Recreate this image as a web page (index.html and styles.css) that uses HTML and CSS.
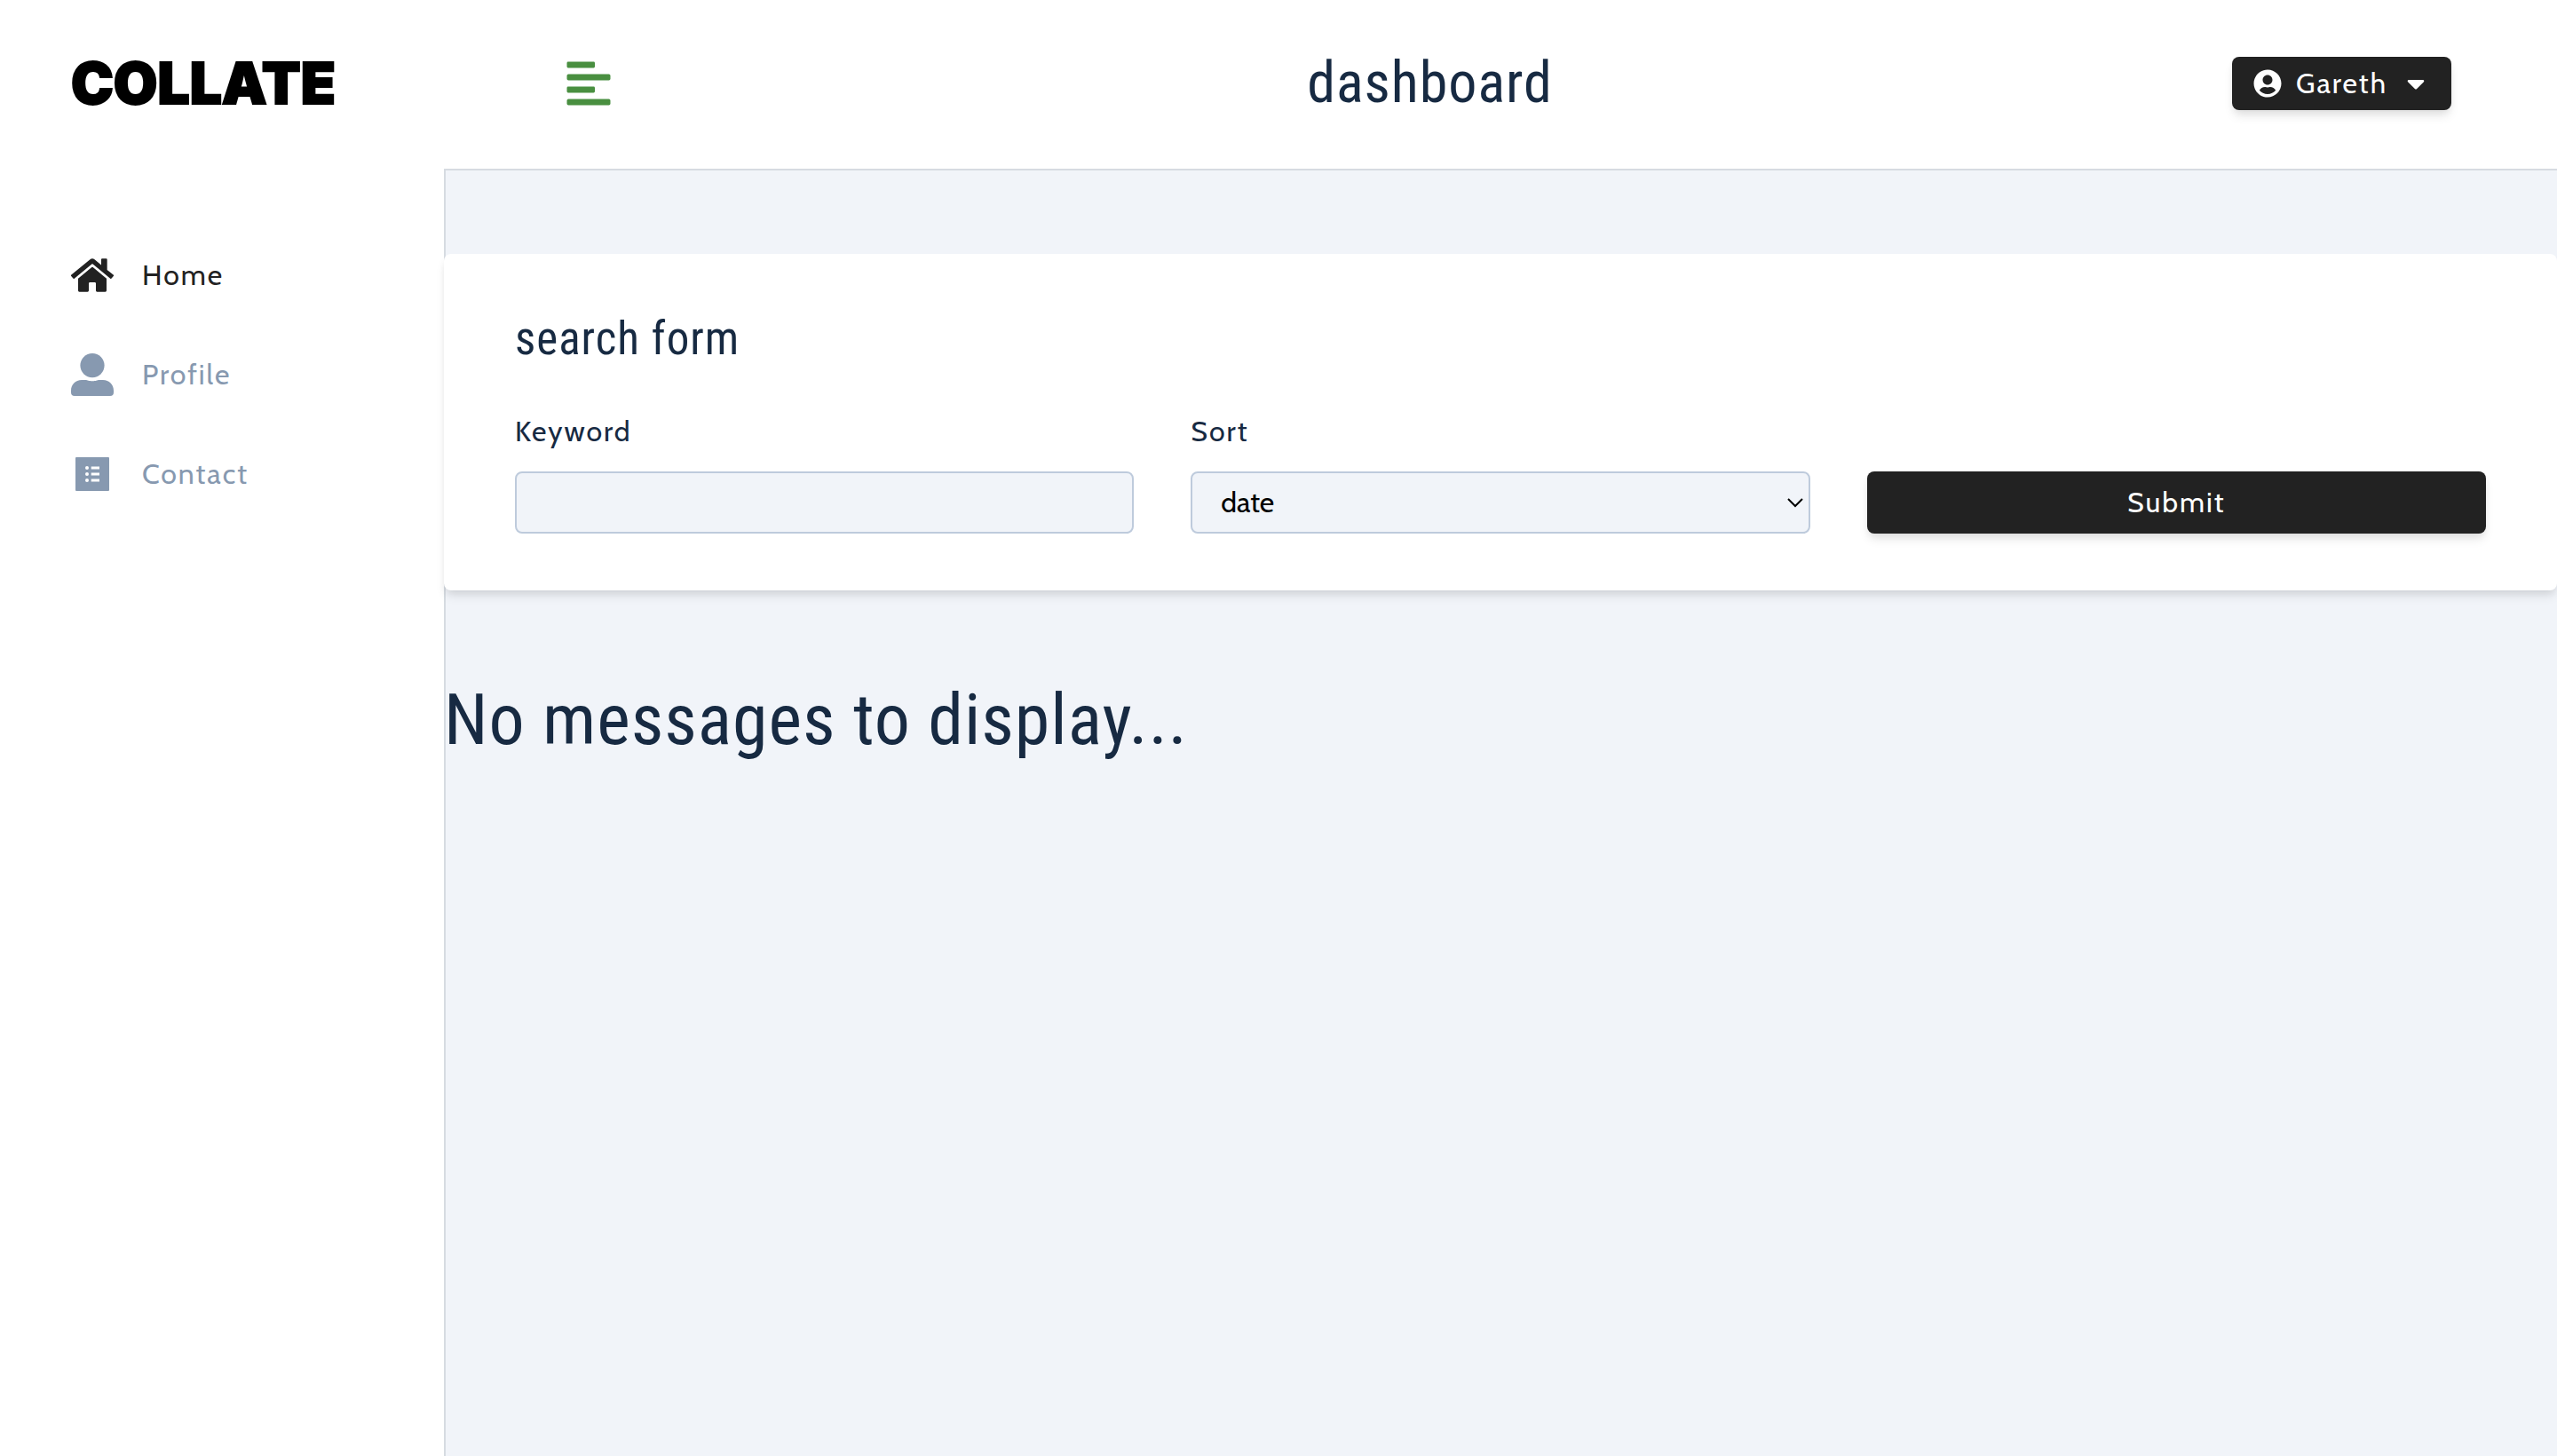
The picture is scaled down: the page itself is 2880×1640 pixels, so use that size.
FILE: index.html
```html
<!DOCTYPE html>
<html lang="en">
<head>
<meta charset="utf-8">
<meta name="viewport" content="width=device-width, initial-scale=1">
<title>Collate | Dashboard</title>
<link rel="stylesheet" href="styles.css">
</head>
<body>
<div class="layout">
  <aside class="sidebar">
    <div class="brand"><a class="logo" href="#">COLLATE</a></div>
    <nav class="nav-links">
      <a class="nav-link active" href="#">
        <svg class="nav-icon" viewBox="0 0 576 512" aria-hidden="true"><path d="M280.37 148.26L96 300.11V464a16 16 0 0 0 16 16l112.06-.29a16 16 0 0 0 15.92-16V368a16 16 0 0 1 16-16h64a16 16 0 0 1 16 16v95.64a16 16 0 0 0 16 16.05L464 480a16 16 0 0 0 16-16V300L295.67 148.26a12.19 12.19 0 0 0-15.3 0zM571.6 251.47L488 182.56V44.05a12 12 0 0 0-12-12h-56a12 12 0 0 0-12 12v72.61L318.47 43a48 48 0 0 0-61 0L4.34 251.47a12 12 0 0 0-1.6 16.9l25.5 31A12 12 0 0 0 45.15 301l235.22-193.74a12.19 12.19 0 0 1 15.3 0L530.9 301a12 12 0 0 0 16.9-1.6l25.5-31a12 12 0 0 0-1.7-16.93z"/></svg>
        <span>Home</span>
      </a>
      <a class="nav-link" href="#">
        <svg class="nav-icon" viewBox="0 0 48 48" aria-hidden="true"><circle cx="24" cy="13.6" r="13.6"/><path d="M0 42C0 35 5 30 12 30h4c3 0 4 1.300 8 1.300s5-1.300 8-1.300h4c7 0 12 5 12 12v2a4 4 0 0 1-4 4H4a4 4 0 0 1-4-4z"/></svg>
        <span>Profile</span>
      </a>
      <a class="nav-link" href="#">
        <svg class="nav-icon" viewBox="0 0 48 48" aria-hidden="true"><path fill-rule="evenodd" d="M6 5h36a1 1 0 0 1 1 1v36a1 1 0 0 1-1 1H6a1 1 0 0 1-1-1V6a1 1 0 0 1 1-1zM16 17a2 2 0 1 0 4 0 2 2 0 1 0-4 0zM16 24a2 2 0 1 0 4 0 2 2 0 1 0-4 0zM16 31a2 2 0 1 0 4 0 2 2 0 1 0-4 0zM22.700 15.500H32v3h-9.300zM22.700 22.500H32v3h-9.300zM22.700 29.500H32v3h-9.300z"/></svg>
        <span>Contact</span>
      </a>
    </nav>
  </aside>
  <div class="main">
    <header class="navbar">
      <button class="toggle" type="button" aria-label="Toggle sidebar">
        <svg class="toggle-icon" viewBox="0 0 448 512" aria-hidden="true"><path d="M12.830 352h262.340A12.820 12.820 0 0 0 288 339.170v-38.340A12.820 12.820 0 0 0 275.170 288H12.830A12.820 12.820 0 0 0 0 300.830v38.340A12.820 12.820 0 0 0 12.830 352zm0-256h262.340A12.820 12.820 0 0 0 288 83.170V44.830A12.820 12.820 0 0 0 275.170 32H12.830A12.820 12.820 0 0 0 0 44.830v38.340A12.820 12.820 0 0 0 12.830 96zM432 160H16a16 16 0 0 0-16 16v32a16 16 0 0 0 16 16h416a16 16 0 0 0 16-16v-32a16 16 0 0 0-16-16zm0 256H16a16 16 0 0 0-16 16v32a16 16 0 0 0 16 16h416a16 16 0 0 0 16-16v-32a16 16 0 0 0-16-16z"/></svg>
      </button>
      <h1 class="page-title">dashboard</h1>
      <button class="btn user-btn" type="button">
        <svg class="btn-icon" viewBox="0 0 496 512" aria-hidden="true"><path d="M248 8C111 8 0 119 0 256s111 248 248 248 248-111 248-248S385 8 248 8zm0 96c48.600 0 88 39.400 88 88s-39.400 88-88 88-88-39.400-88-88 39.400-88 88-88zm0 344c-58.700 0-111.300-26.600-146.500-68.200 18.800-35.400 55.600-59.800 98.500-59.800 2.400 0 4.800.4 7.100 1.100 13 4.200 26.600 6.900 40.900 6.900 14.300 0 28-2.700 40.900-6.900 2.300-.7 4.700-1.100 7.100-1.100 42.900 0 79.700 24.400 98.500 59.800C359.300 421.400 306.700 448 248 448z"/></svg>
        <span>Gareth</span>
        <svg class="btn-icon" viewBox="0 0 320 512" aria-hidden="true"><path d="M31.300 192h257.300c17.800 0 26.700 21.500 14.100 34.100L174.100 354.800c-7.800 7.800-20.500 7.800-28.300 0L17.200 226.100C4.600 213.500 13.500 192 31.300 192z"/></svg>
      </button>
    </header>
    <main class="content">
      <form class="search-card">
        <h2 class="form-title">search form</h2>
        <div class="form-grid">
          <div class="field">
            <label class="label" for="keyword">Keyword</label>
            <input class="control" id="keyword" name="keyword" type="text">
          </div>
          <div class="field">
            <label class="label" for="sort">Sort</label>
            <div class="select-wrap">
              <select class="control" id="sort" name="sort"><option>date</option></select>
              <svg class="chevron" viewBox="0 0 18 12" aria-hidden="true"><path d="M1 2l8 8 8-8"/></svg>
            </div>
          </div>
          <button class="btn submit" type="submit">Submit</button>
        </div>
      </form>
      <h2 class="empty">No messages to display...</h2>
    </main>
  </div>
</div>
</body>
</html>
```
FILE: styles.css
```css
:root {
  --ink: #172a42;
  --page: #f1f4f9;
  --line: #d6dbe1;
  --muted: #8799b0;
  --dark: #222222;
  --body-font: Cabin, Lato, "Noto Sans", sans-serif;
  --heading-font: "Roboto Condensed", "Liberation Sans Narrow", Roboto, sans-serif;
}

* {
  box-sizing: border-box;
}

body {
  margin: 0;
  background: var(--page);
  color: var(--ink);
  font-family: var(--body-font);
  font-size: 32px;
  font-weight: 400;
  line-height: 48px;
  letter-spacing: 2px;
}

h1,
h2 {
  margin: 0;
  font-family: var(--heading-font);
  font-weight: 400;
  letter-spacing: 1px;
}

button,
input,
select {
  font: inherit;
}

.layout {
  display: grid;
  grid-template-columns: 500px minmax(0, 1fr);
  min-height: 100vh;
}

.sidebar {
  background: #ffffff;
}

.brand {
  display: flex;
  align-items: center;
  height: 190px;
  margin-bottom: 64px;
  padding: 0 0 2px 80px;
}

.logo {
  color: #000000;
  font-family: Inter, sans-serif;
  font-size: 64px;
  font-weight: 900;
  line-height: 64px;
  letter-spacing: normal;
  text-decoration: none;
  -webkit-text-stroke: 2px #000000;
}

.nav-links {
  display: flex;
  flex-direction: column;
}

.nav-link {
  display: flex;
  align-items: center;
  gap: 32px;
  padding: 32px 80px;
  color: var(--muted);
  text-decoration: none;
}

.nav-link.active {
  color: var(--dark);
}

.nav-icon {
  width: 48px;
  height: 48px;
  fill: currentColor;
}

.main {
  display: flex;
  flex-direction: column;
}

.navbar {
  display: flex;
  align-items: center;
  justify-content: space-between;
  height: 190px;
  padding: 0 5% 2px;
  background: #ffffff;
}

.toggle {
  display: flex;
  padding: 0 16px;
  border: 0;
  background: transparent;
  color: #498f40;
}

.toggle-icon {
  width: 56px;
  height: 56px;
  fill: currentColor;
}

.page-title {
  font-size: 64px;
  line-height: 80px;
}

.btn {
  border: 0;
  border-radius: 8px;
  background: var(--dark);
  color: #ffffff;
  letter-spacing: 2px;
  box-shadow: 0 8px 12px -2px rgba(0, 0, 0, 0.1), 0 4px 8px -2px rgba(0, 0, 0, 0.06);
}

.user-btn {
  display: flex;
  align-items: center;
  gap: 16px;
  height: 60px;
  padding: 0 24px;
}

.btn-icon {
  width: 32px;
  height: 32px;
  fill: currentColor;
}

.content {
  flex: 1;
  padding-top: 94px;
  border-top: 2px solid var(--line);
  box-shadow: inset 2px 0 var(--line);
}

.search-card {
  padding: 64px 80px;
  border-radius: 8px;
  background: #ffffff;
  box-shadow: 0 8px 12px -2px rgba(0, 0, 0, 0.1), 0 4px 8px -2px rgba(0, 0, 0, 0.06);
}

.form-title {
  margin-bottom: 48px;
  font-size: 51px;
  line-height: 64px;
}

.form-grid {
  display: grid;
  grid-template-columns: repeat(3, minmax(0, 1fr));
  align-items: end;
  gap: 64px;
}

.field {
  display: grid;
  gap: 21px;
}

.control {
  width: 100%;
  height: 70px;
  padding: 0 32px;
  border: 2px solid #becbdc;
  border-radius: 8px;
  background: var(--page);
  color: #000000;
  appearance: none;
}

.select-wrap {
  display: grid;
  align-items: center;
}

.select-wrap > * {
  grid-area: 1 / 1;
}

.chevron {
  justify-self: end;
  width: 18px;
  height: 12px;
  margin-right: 8px;
  fill: none;
  stroke: #000000;
  stroke-width: 2;
  pointer-events: none;
}

.submit {
  height: 70px;
}

.empty {
  margin-top: 96px;
  font-size: 80px;
  line-height: 100px;
}
```
